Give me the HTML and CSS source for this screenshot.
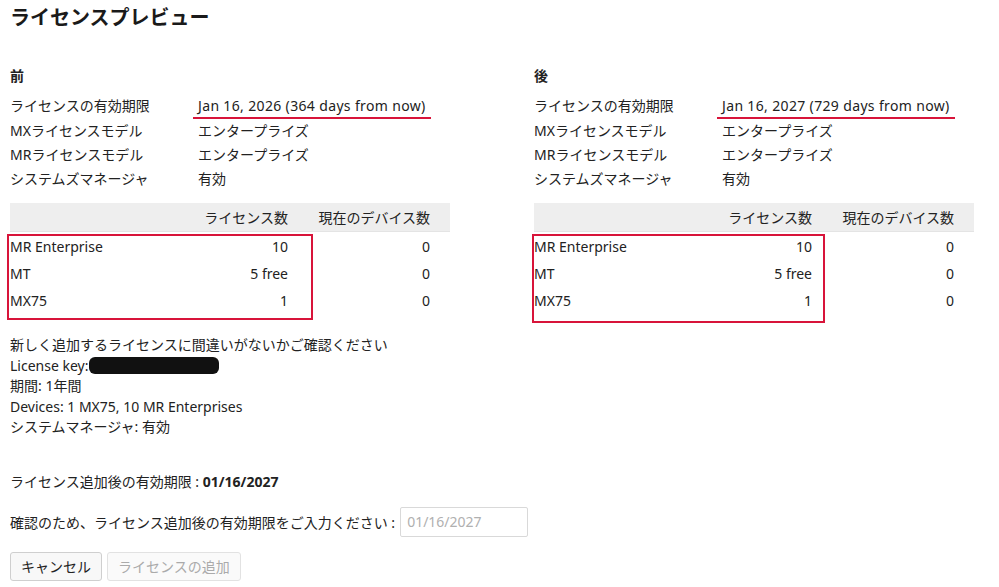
FILE: index.html
```html
<!doctype html>
<html lang="ja">
  <head>
    <meta charset="utf-8" />
    <meta name="viewport" content="width=device-width, initial-scale=1" />
    <title>ライセンスプレビュー</title>
    <link rel="stylesheet" href="styles.css">
  </head>
  <body>
    <h1 class="title">ライセンスプレビュー</h1>

    <div class="compare">
      <section class="side">
        <h2>前</h2>
        <div class="info">
          <span class="label">ライセンスの有効期限</span>
          <span class="value"><span class="marked">Jan 16, 2026 (364 days from now)</span></span>
          <span class="label">MXライセンスモデル</span>
          <span class="value">エンタープライズ</span>
          <span class="label">MRライセンスモデル</span>
          <span class="value">エンタープライズ</span>
          <span class="label">システムズマネージャ</span>
          <span class="value">有効</span>
        </div>
        <div class="table-wrap">
          <table class="counts">
            <thead>
              <tr>
                <th class="col-name"></th>
                <th class="col-lic">ライセンス数</th>
                <th class="col-dev">現在のデバイス数</th>
              </tr>
            </thead>
            <tbody>
              <tr><td class="col-name">MR Enterprise</td><td class="col-lic">10</td><td class="col-dev">0</td></tr>
              <tr><td class="col-name">MT</td><td class="col-lic">5 free</td><td class="col-dev">0</td></tr>
              <tr><td class="col-name">MX75</td><td class="col-lic">1</td><td class="col-dev">0</td></tr>
            </tbody>
          </table>
          <div class="mark mark-before"></div>
        </div>
      </section>

      <section class="side">
        <h2>後</h2>
        <div class="info">
          <span class="label">ライセンスの有効期限</span>
          <span class="value"><span class="marked">Jan 16, 2027 (729 days from now)</span></span>
          <span class="label">MXライセンスモデル</span>
          <span class="value">エンタープライズ</span>
          <span class="label">MRライセンスモデル</span>
          <span class="value">エンタープライズ</span>
          <span class="label">システムズマネージャ</span>
          <span class="value">有効</span>
        </div>
        <div class="table-wrap">
          <table class="counts">
            <thead>
              <tr>
                <th class="col-name"></th>
                <th class="col-lic">ライセンス数</th>
                <th class="col-dev">現在のデバイス数</th>
              </tr>
            </thead>
            <tbody>
              <tr><td class="col-name">MR Enterprise</td><td class="col-lic">10</td><td class="col-dev">0</td></tr>
              <tr><td class="col-name">MT</td><td class="col-lic">5 free</td><td class="col-dev">0</td></tr>
              <tr><td class="col-name">MX75</td><td class="col-lic">1</td><td class="col-dev">0</td></tr>
            </tbody>
          </table>
          <div class="mark mark-after"></div>
        </div>
      </section>
    </div>

    <div class="summary">
      <p>新しく追加するライセンスに間違いがないかご確認ください</p>
      <p>License key:<span class="redacted"></span></p>
      <p>期間: 1年間</p>
      <p>Devices: 1 MX75, 10 MR Enterprises</p>
      <p>システムマネージャ: 有効</p>
    </div>

    <p class="expiry">ライセンス追加後の有効期限 : <strong>01/16/2027</strong></p>

    <div class="verify">
      <label for="expiry-input">確認のため、ライセンス追加後の有効期限をご入力ください :</label>
      <input id="expiry-input" type="text" placeholder="01/16/2027" />
    </div>

    <div class="actions">
      <button class="btn">キャンセル</button>
      <button class="btn" disabled>ライセンスの追加</button>
    </div>
  </body>
</html>
```

FILE: styles.css
```css
* {
  box-sizing: border-box;
}

body {
  margin: 0;
  padding: 0 10px;
  font-family: "Noto Sans", "Noto Sans CJK JP", sans-serif;
  font-size: 14px;
  color: #222;
  background: #fff;
}

.title {
  margin: 6px 0 0 0;
  font-size: 20px;
  line-height: 24px;
  font-weight: 700;
  color: #1a1a1a;
}

.compare {
  display: grid;
  grid-template-columns: 440px 440px;
  column-gap: 84px;
  margin-top: 36px;
}

.side h2 {
  margin: 0;
  font-size: 14px;
  line-height: 20px;
  font-weight: 700;
}

.info {
  display: grid;
  grid-template-columns: 188px 1fr;
  margin-top: 8px;
  line-height: 24px;
}

.marked {
  display: inline-block;
  padding: 0 5px;
  margin-left: -5px;
  line-height: 22px;
  letter-spacing: 0.35px;
  border-bottom: 2px solid #d8143a;
}

.table-wrap {
  position: relative;
  margin-top: 12px;
}

.counts {
  width: 100%;
  border-collapse: collapse;
}

.counts th {
  height: 28px;
  padding: 0;
  background: #eeeeee;
  border-bottom: 1px solid #e4e4e4;
  font-weight: 400;
}

.counts td {
  height: 27px;
  padding: 4px 0 0 0;
}

.counts .col-name {
  text-align: left;
}

.counts .col-lic {
  width: 150px;
  padding-right: 22px;
  text-align: right;
}

.counts .col-dev {
  width: 140px;
  padding-right: 20px;
  text-align: right;
}

.mark {
  position: absolute;
  border: 2px solid #d8143a;
  pointer-events: none;
}

.mark-before {
  left: -3px;
  top: 31px;
  width: 306px;
  height: 86px;
}

.mark-after {
  left: -2px;
  top: 31px;
  width: 293px;
  height: 89px;
}

.summary {
  margin-top: 23px;
}

.summary p {
  margin: 0;
  line-height: 20.5px;
}

.redacted {
  display: inline-block;
  width: 130px;
  height: 17px;
  margin-left: 1px;
  vertical-align: -3px;
  background: #111;
  border-radius: 6px;
}

.expiry {
  margin: 34px 0 0 0;
  line-height: 20px;
}

.expiry strong {
  font-weight: 700;
}

.verify {
  display: flex;
  align-items: center;
  gap: 5px;
  margin-top: 15px;
}

.verify input {
  width: 128px;
  height: 30px;
  padding: 0 6px;
  border: 1px solid #d9d9d9;
  border-radius: 2px;
  font-family: inherit;
  font-size: 14px;
  color: #222;
}

.verify input::placeholder {
  color: #b0b0b0;
}

.actions {
  display: flex;
  gap: 5px;
  margin-top: 15px;
}

.btn {
  height: 29px;
  padding: 0 10px;
  background: #f8f8f8;
  border: 1px solid #cfcfcf;
  border-radius: 3px;
  font-family: inherit;
  font-size: 14px;
  color: #222;
  cursor: pointer;
}

.btn:disabled {
  color: #aaa;
  border-color: #e2e2e2;
  background: #fafafa;
  cursor: default;
}
```
